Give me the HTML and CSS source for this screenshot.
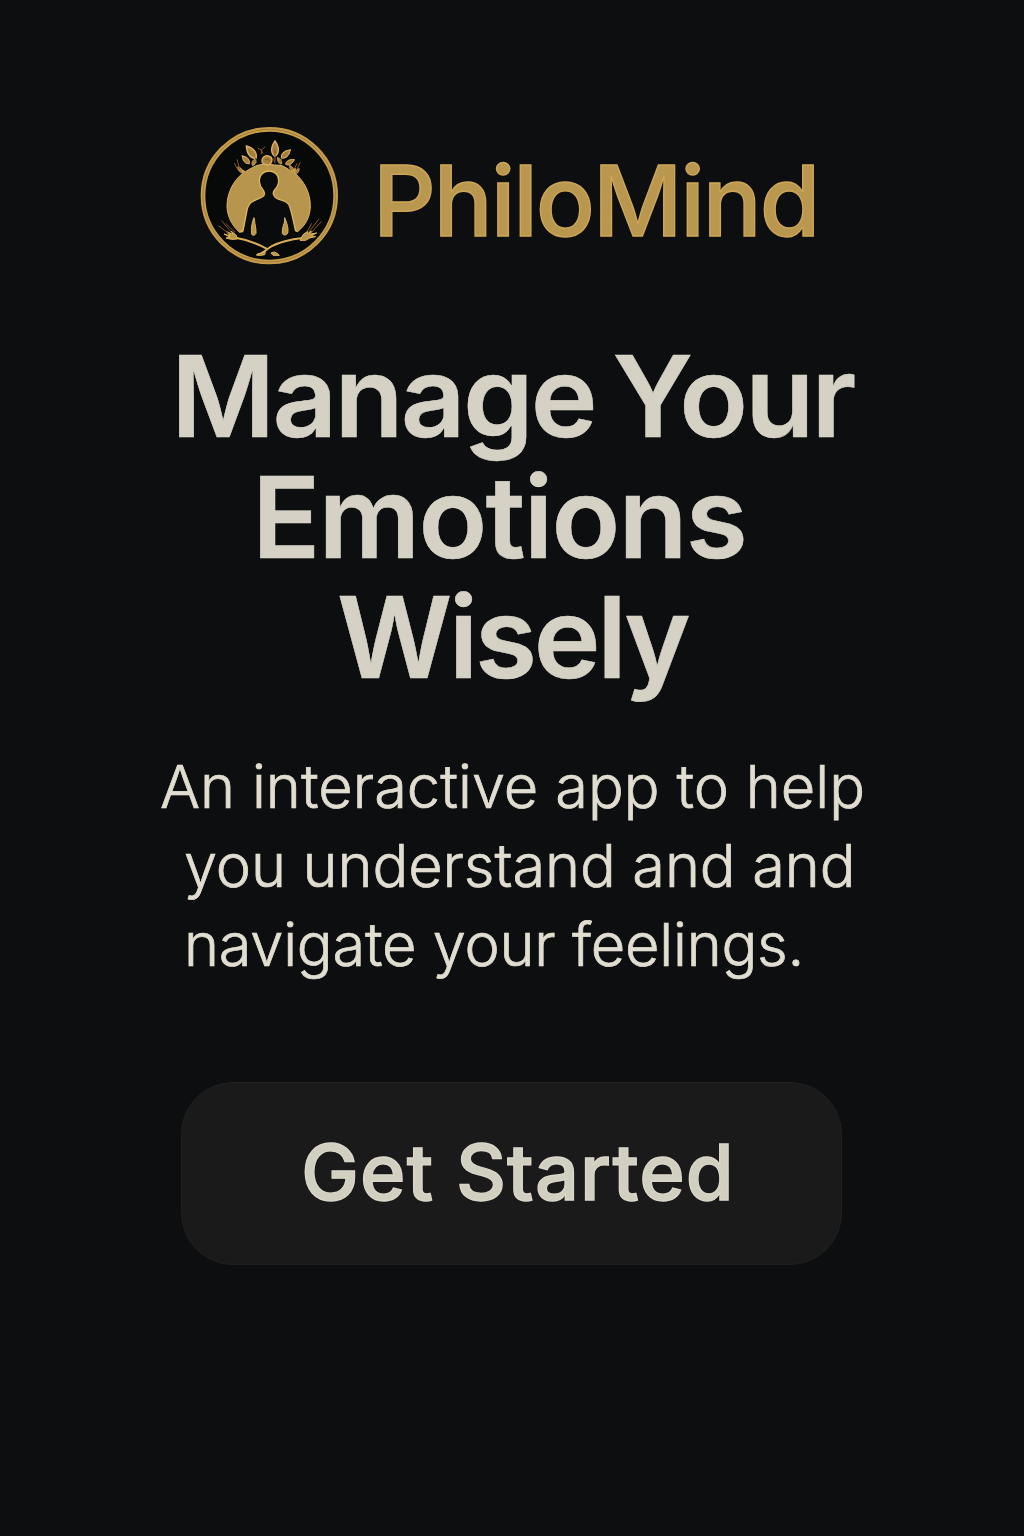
FILE: index.html
```html
<!DOCTYPE html>
<html lang="en">
<head>
<meta charset="utf-8">
<title>PhiloMind</title>
<link rel="stylesheet" href="styles.css">
</head>
<body>
<main class="screen">
  <header class="brand">
    <svg class="logo" viewBox="0 0 450 450" aria-hidden="true">
      <defs>
        <path id="leaf" d="M0 0C-13-9-14-26 0-46C14-26 13-9 0 0Z"/>
      </defs>
      <circle class="ring" cx="226" cy="227" r="199"/>
      <circle class="ring-line" cx="226" cy="227" r="199"/>
      <!-- sun behind the figure -->
      <path class="gold" d="M136 336C108 312 99 280 99 256C100 216 120 181 145 161L143 150L155 155C170 144 182 140 190 136L215 132L242 135L262 136C274 142 285 148 291 154L304 145L303 160C331 184 349 220 349 257C349 288 336 316 309 336L303 327Z"/>
      <!-- crown of leaves -->
      <g class="leaf">
        <use href="#leaf" transform="translate(186 115) rotate(-38) scale(1.02)"/>
        <use href="#leaf" transform="translate(243 109)"/>
        <use href="#leaf" transform="translate(262 114) rotate(48) scale(.8)"/>
        <use href="#leaf" transform="translate(275 133) rotate(62) scale(.65)"/>
        <use href="#leaf" transform="translate(166 131) rotate(-42) scale(.7)"/>
        <use href="#leaf" transform="translate(146 158) rotate(-40) scale(.5)"/>
        <use href="#leaf" transform="translate(176 137) rotate(20) scale(.5)"/>
        <use href="#leaf" transform="translate(262 132) rotate(-30) scale(.5)"/>
        <use href="#leaf" transform="translate(298 153) rotate(-35) scale(.45)"/>
        <use href="#leaf" transform="translate(303 162) rotate(38) scale(.45)"/>
        <path d="M204 126C203 110 216 101 232 112C238 121 232 131 224 135C211 134 206 131 204 126Z"/>
      </g>
      <path class="twig" d="M207 101L202 90L191 84M202 90L214 80M202 90V103M213 120L222 116L227 124M239 115L243 130M132 150L121 129M137 147L129 118M308 150L319 127M302 145L309 130M184 113L188 129M243 88V125M264 113L260 124"/>
      <!-- seated figure -->
      <path class="figure" d="M225 153C207 153 195 167 196 184C197 195 200 202 206 208C213 216 214 226 205 231L181 242C165 248 160 260 158 276L148 333L143 350L226 374L307 345L303 327C299 306 294 282 288 263C283 244 268 242 252 237C238 231 234 219 242 210C248 203 254 195 254 182C254 166 243 153 225 153Z"/>
      <path class="rim" d="M136 336L147 332L158 276C160 260 165 248 181 242L205 231C214 226 213 216 206 208C200 202 197 195 196 184C195 167 207 153 225 153C243 153 254 166 254 182C254 195 248 203 242 210C234 219 238 231 252 237C268 242 283 244 288 263C294 282 299 306 305 334"/>
      <path class="gold" d="M180 293C173 307 171 329 173 343C177 348 183 346 186 340C187 324 182 312 182 304ZM272 293C277 306 285 325 281 340C277 346 269 347 265 341C263 325 271 311 272 303Z"/>
      <!-- crossed branches -->
      <path class="branch" d="M118 352C151 358 188 369 216 385M192 403C207 401 217 388 232 379C260 364 290 358 327 354"/>
      <path class="gold" d="M187 405Q205 399 214 394L212 404Q199 408 187 405ZM231 399L241 396Q250 399 256 406L237 406ZM90 342L108 348L98 335L117 343L111 333L127 346L130 357Q112 361 96 354L109 352ZM318 361L327 344L341 334L341 341L352 333L348 342L368 339L352 347L365 350Q345 352 335 361Z"/>
      <path class="twig" d="M104 340L73 317M112 337L83 302M123 337L95 310M344 337L375 297M350 340L382 305M340 334L353 310"/>
    </svg>
    <span class="brand-name">PhiloMind</span>
  </header>
  <h1 class="headline">
    <span class="line line-manage">Manage Your</span>
    <span class="line line-emotions">Emotions</span>
    <span class="line line-wisely">Wisely</span>
  </h1>
  <p class="intro">
    <span class="line intro-first">An interactive app to help</span>
    <span class="line intro-second">you understand and and</span>
    <span class="line intro-third">navigate your feelings.</span>
  </p>
  <button class="cta" type="button">Get Started</button>
</main>
</body>
</html>
```
FILE: styles.css
```css
* { box-sizing: border-box; }
body {
  margin: 0;
  background: #0c0e0f;
  color: #d5d2c5;
  font-family: Inter, "Liberation Sans", sans-serif;
}
.screen {
  min-height: 1536px;
  padding-top: 120px;
  display: flex;
  flex-direction: column;
  align-items: flex-start;
}
.brand {
  display: flex;
  height: 150px;
  margin-left: 194px;
}
.logo { width: 150px; height: 150px; flex: none; }
.ring { fill: #070909; stroke: #c79d4c; stroke-width: 14; }
.ring-line { fill: none; stroke: #8f6c2e; stroke-width: 2; }
.gold { fill: #b8954c; stroke: #dfb65c; stroke-width: 3; stroke-linejoin: round; }
.leaf { fill: #a5803b; stroke: #dfb168; stroke-width: 4; }
.twig { fill: none; stroke: #8a5524; stroke-width: 3; }
.figure { fill: #090b0c; }
.rim { fill: none; stroke: #dfb65c; stroke-width: 4; }
.branch { fill: none; stroke: #d8ad59; stroke-width: 6; stroke-linecap: round; }
.brand-name {
  margin: 21px 0 0 29px;
  font-size: 98px;
  line-height: 120px;
  font-weight: 500;
  letter-spacing: -2.1px;
  color: #b9974f;
  -webkit-text-stroke: 1.4px #cda657;
  white-space: nowrap;
}
.line { display: block; white-space: nowrap; }
.headline {
  margin: 66px 0 0;
  font-size: 113px;
  line-height: 120.5px;
  font-weight: 600;
  -webkit-text-stroke: .5px #dad7cb;
}
.line-manage { margin-left: 171px; letter-spacing: -2.8px; word-spacing: -8px; }
.line-emotions { margin-left: 252px; letter-spacing: -1.8px; }
.line-wisely { margin-left: 337px; letter-spacing: -3.4px; }
.intro {
  margin: 49px 0 0;
  font-size: 59.5px;
  line-height: 79px;
  font-weight: 300;
  color: #e1ded1;
  -webkit-text-stroke: .7px #e1ded1;
}
.intro-first { margin-left: 160px; letter-spacing: .04px; }
.intro-second { margin-left: 184px; letter-spacing: -.1px; }
.intro-third { margin-left: 184px; letter-spacing: -.22px; }
.cta {
  width: 661px;
  height: 183px;
  margin: 98px 0 0 181px;
  padding: 0 0 2px 119px;
  border: 1px solid #1f2020;
  border-radius: 52px;
  background: #1a1a1b;
  color: #d1cfc0;
  font: 500 77.5px/176px Inter, "Liberation Sans", sans-serif;
  letter-spacing: 1.1px;
  -webkit-text-stroke: 1.4px #dad7ca;
  text-align: left;
  white-space: nowrap;
}
```
